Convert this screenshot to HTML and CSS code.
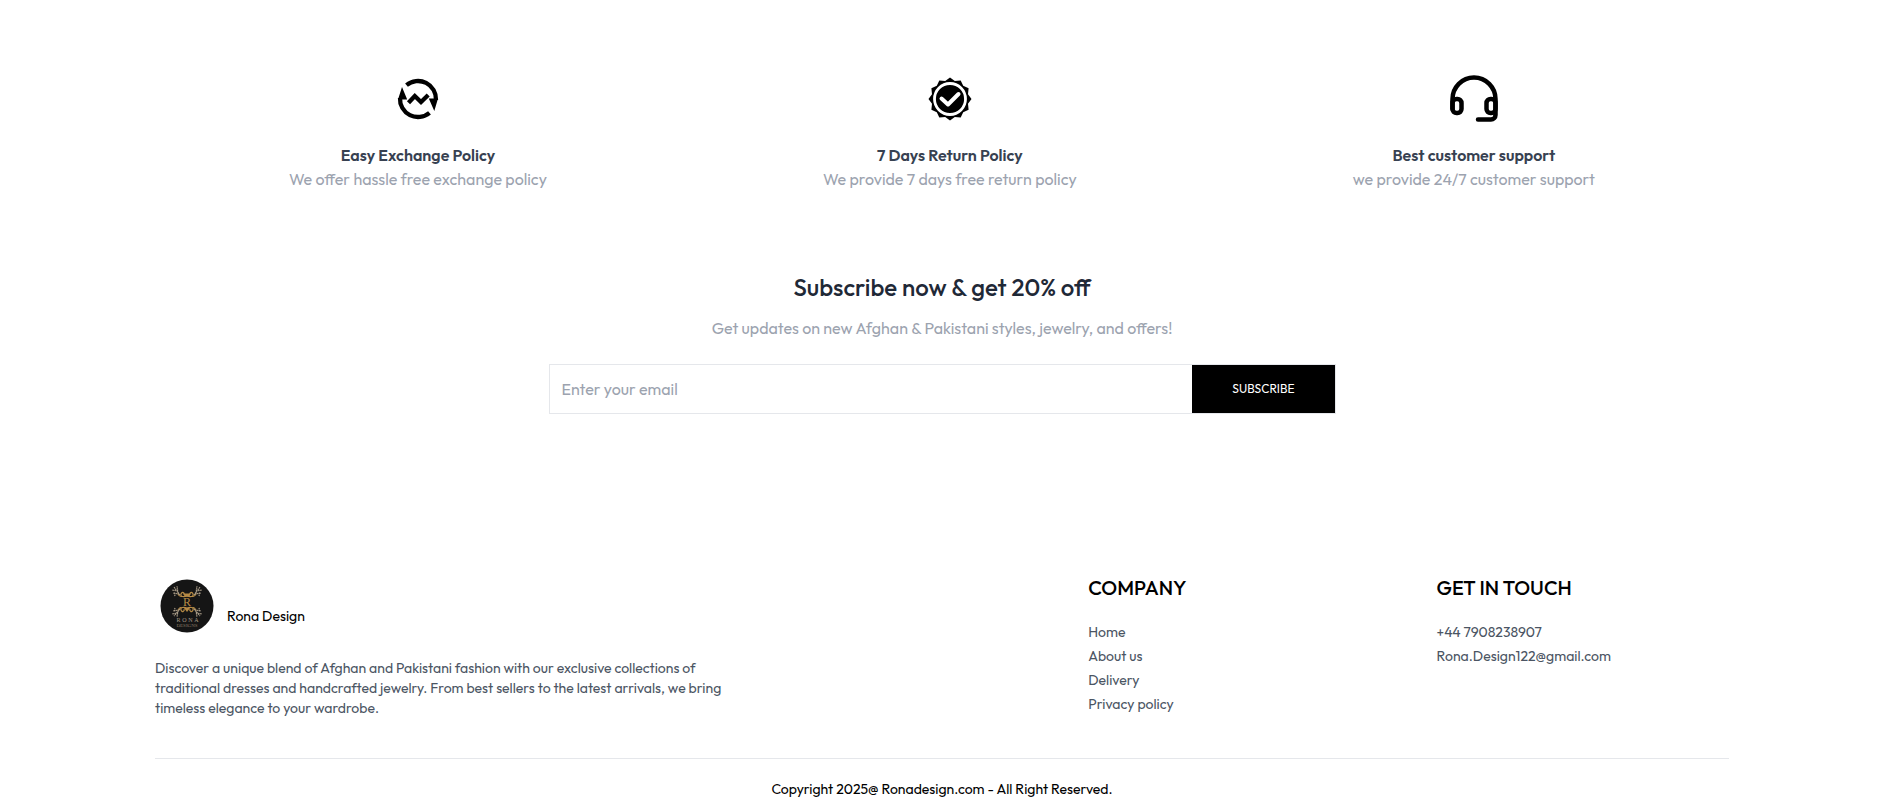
FILE: index.html
```html
<!DOCTYPE html>
<html lang="en">
<head>
<meta charset="utf-8">
<meta name="viewport" content="width=device-width, initial-scale=1">
<title>Rona Design</title>
<link rel="stylesheet" href="styles.css">
</head>
<body>
<main>
  <section class="policies">
    <article class="policy">
      <svg class="policy-icon" viewBox="0 0 48 48" aria-hidden="true">
        <path d="M12.500 10.200A18 18 0 0 1 42 25M35.500 37.800A18 18 0 0 1 6 23" fill="none" stroke="#000" stroke-width="4.300"/>
        <path d="M8 12 13.200 24.500H4zM40.300 36 34.800 23.500H44z"/>
        <path d="M14.500 27.800 20.800 21 27 27 34.200 20" fill="none" stroke="#000" stroke-width="4.300"/>
      </svg>
      <h2 class="policy-title">Easy Exchange Policy</h2>
      <p class="muted">We offer hassle free exchange policy</p>
    </article>
    <article class="policy">
      <svg class="policy-icon" viewBox="0 0 48 48" aria-hidden="true">
        <path d="M24 2.500 28.800 6 34.700 5.400 37.200 10.800 42.600 13.300 42 19.200 45.500 24 42 28.800 42.600 34.700 37.200 37.200 34.700 42.600 28.800 42 24 45.500 19.200 42 13.300 42.600 10.800 37.200 5.400 34.700 6 28.800 2.500 24 6 19.200 5.400 13.300 10.800 10.800 13.300 5.400 19.200 6z"/>
        <circle cx="24" cy="24" r="15.500" fill="none" stroke="#fff" stroke-width="2.800"/>
        <path d="M15.500 23.500 22 29.500 32.500 19" fill="none" stroke="#fff" stroke-width="4" stroke-linecap="round" stroke-linejoin="round"/>
      </svg>
      <h2 class="policy-title">7 Days Return Policy</h2>
      <p class="muted">We provide 7 days free return policy</p>
    </article>
    <article class="policy">
      <svg class="policy-icon" viewBox="0 0 48 48" aria-hidden="true" fill="none" stroke="#000" stroke-width="4.500" stroke-linecap="round" stroke-linejoin="round">
        <path d="M2.500 34V24a21.500 21.500 0 0 1 43 0V40a4.500 4.500 0 0 1-4.500 4.500H28"/>
        <rect x="2.500" y="24" width="9" height="14" rx="4"/>
        <rect x="36.500" y="24" width="9" height="14" rx="4"/>
      </svg>
      <h2 class="policy-title">Best customer support</h2>
      <p class="muted">we provide 24/7 customer support</p>
    </article>
  </section>

  <section class="subscribe">
    <h2 class="subscribe-title">Subscribe now &amp; get 20% off</h2>
    <p class="muted">Get updates on new Afghan &amp; Pakistani styles, jewelry, and offers!</p>
    <form class="subscribe-form">
      <input class="email" type="email" placeholder="Enter your email" aria-label="Email address">
      <button class="submit" type="submit">SUBSCRIBE</button>
    </form>
  </section>
</main>

<footer>
  <div class="footer-grid">
    <section>
      <div class="brand">
        <svg class="logo" viewBox="0 0 54 54" aria-hidden="true">
          <circle cx="27" cy="27" r="26.500" fill="#151515"/>
          <g fill="none" stroke="#b58a45" stroke-width="1.200">
            <path d="M27 17c-3 1-7 1-6-2s4-1 3 1M27 17c3 1 7 1 6-2s-4-1-3 1M22 17c-2 1-4-1-4-3M32 17c2 1 4-1 4-3"/>
            <path d="M23.500 14.500h7l-1 3h-5z" fill="#b58a45" stroke="none"/>
            <path stroke="#a79a86" stroke-dasharray="1.500 .6" d="M20 16l-6-8M19 15l-6-1M18 14l-1-7M18 12l-6-1M15 17l-1-4M34 16l6-8M35 15l6-1M36 14l1-7M36 12l6-1M39 17l1-4"/>
          </g>
          <g fill="none" stroke="#b58a45" stroke-width="1.200">
            <path d="M27 29c-3-1-7-1-6 2s4 1 3-1M27 29c3-1 7-1 6 2s-4 1-3-1M22 29c-2-1-4 1-4 3M32 29c2-1 4 1 4 3"/>
            <path d="M24 29h6l-3 4z" fill="#b58a45" stroke="none"/>
            <path stroke="#a79a86" stroke-dasharray="1.500 .6" d="M20 30l-6 7M19 31l-6 1M18 32l-1 6M18 34l-6 1M15 29l-1 4M34 30l6 7M35 31l6 1M36 32l1 6M36 34l6 1M39 29l1 4"/>
          </g>
          <text class="logo-initial" x="27" y="27">R</text>
          <text class="logo-text" y="43"><tspan x="18.500">R</tspan><tspan x="24.500">O</tspan><tspan x="30.500">N</tspan><tspan x="36.500">A</tspan></text>
          <text class="logo-small" x="27" y="48">DESIGNS</text>
        </svg>
        <span>Rona Design</span>
      </div>
      <p class="about">Discover a unique blend of Afghan and Pakistani fashion with our exclusive collections of traditional dresses and handcrafted jewelry. From best sellers to the latest arrivals, we bring timeless elegance to your wardrobe.</p>
    </section>
    <section>
      <h2 class="footer-title">COMPANY</h2>
      <ul class="footer-list">
        <li>Home</li>
        <li>About us</li>
        <li>Delivery</li>
        <li>Privacy policy</li>
      </ul>
    </section>
    <section>
      <h2 class="footer-title">GET IN TOUCH</h2>
      <ul class="footer-list">
        <li>+44 7908238907</li>
        <li>Rona.Design122@gmail.com</li>
      </ul>
    </section>
  </div>
  <p class="copyright">Copyright 2025@ Ronadesign.com - All Right Reserved.</p>
</footer>
</body>
</html>
```
FILE: styles.css
```css
*, *::before, *::after { box-sizing: border-box; }
body {
  margin: 0;
  padding: 75px 164px 0 155px;
  background: #fff;
  color: #000;
  font: 400 16px/24px Outfit, Lato, sans-serif;
}
h2, p, ul { margin: 0; padding: 0; }
ul { list-style: none; }
input, button { font: inherit; }

.muted { color: #9ca3af; }

.policies {
  display: flex;
  justify-content: space-around;
  gap: 8px;
  text-align: center;
}
.policy-icon {
  display: block;
  width: 48px;
  height: 48px;
  margin: 0 auto 20px;
}
.policy-title {
  color: #374151;
  font-size: 16px;
  font-weight: 600;
  line-height: 24px;
}

.subscribe { margin-top: 80px; text-align: center; }
.subscribe-title {
  margin-bottom: 13px;
  color: #1f2937;
  font-size: 24px;
  font-weight: 500;
  line-height: 32px;
}
.subscribe-form {
  display: flex;
  width: 50%;
  margin: 24px auto 0;
  border: 1px solid #e5e7eb;
}
.email {
  flex: 1;
  min-width: 0;
  padding: 0 12px;
  border: 0;
  outline: 0;
  background: transparent;
}
.email::placeholder { color: #9ca3af; opacity: 1; }
.submit {
  padding: 16px 40px;
  border: 0;
  background: #000;
  color: #fff;
  font-size: 12px;
  line-height: 16px;
}

footer { margin-top: 160px; font-size: 14px; line-height: 20px; }
.footer-grid {
  display: grid;
  grid-template-columns: 3fr 1fr 1fr;
  gap: 56px;
  padding-bottom: 40px;
}
.brand {
  display: flex;
  align-items: flex-end;
  gap: 13px;
  margin-bottom: 25px;
  padding: 5px 5px 0;
}
.brand span { padding-bottom: 7px; }
.logo { width: 54px; height: 54px; }
.logo-initial, .logo-text, .logo-small {
  font-family: "Liberation Serif", serif;
  text-anchor: middle;
  fill: #b58a45;
}
.logo-initial { font-size: 12px; }
.logo-text { font-size: 6px; fill: #a79a86; }
.logo-small { font-size: 5px; fill: #8a7b66; }
.about { width: 67%; color: #4b5563; }
.footer-title {
  margin-bottom: 20px;
  font-size: 20px;
  font-weight: 500;
  line-height: 28px;
}
.footer-list {
  display: flex;
  flex-direction: column;
  gap: 4px;
  color: #4b5563;
}
.copyright {
  padding: 20px 0 13px;
  border-top: 1px solid #e5e7eb;
  text-align: center;
}
```
